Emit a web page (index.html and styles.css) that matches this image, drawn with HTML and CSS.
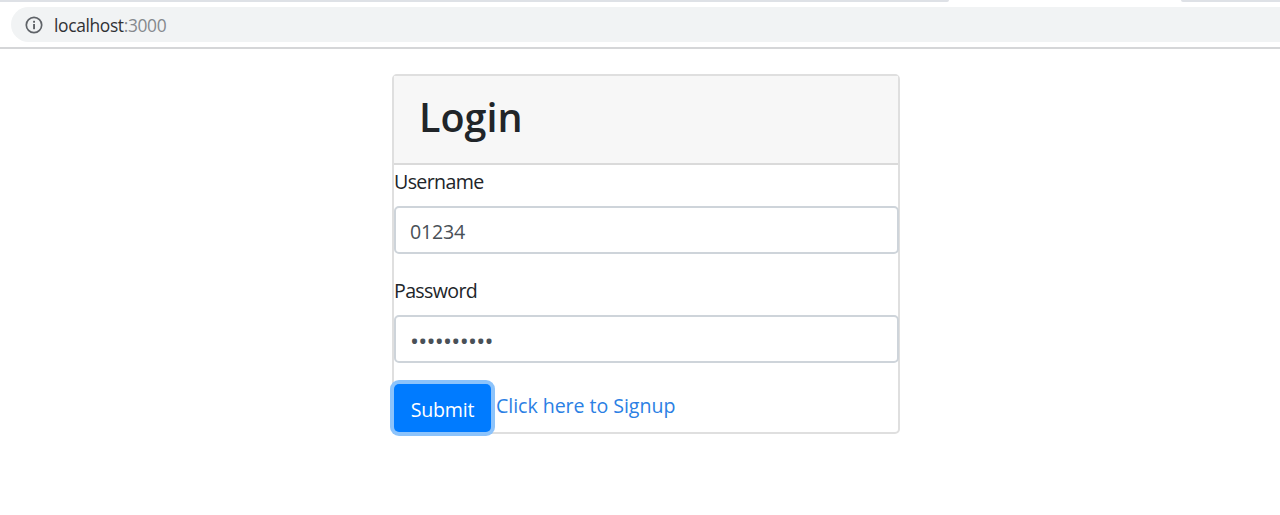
FILE: index.html
```
<!DOCTYPE html>
<html lang="en">
<head>
    <meta charset="UTF-8">
    <meta name="viewport" content="width=device-width, initial-scale=1.0">
    <title>Login</title>
    <link rel="stylesheet" href="styles.css">
</head>
<body>
    <div class="tabs">
        <div class="tab-left"></div>
        <div class="tab-right"></div>
    </div>
    <div class="toolbar">
        <div class="address">
            <svg class="info" viewBox="0 0 18 18" width="18" height="18">
                <circle cx="9" cy="9" r="7.7" fill="none" stroke="#5f6368" stroke-width="1.7"/>
                <rect x="8.1" y="4.8" width="1.9" height="1.9" fill="#5f6368"/>
                <rect x="8.1" y="8" width="1.9" height="5.2" fill="#5f6368"/>
            </svg>
            <span class="host">localhost</span><span class="port">:3000</span>
        </div>
    </div>

    <div class="card">
        <div class="card-header">
            <h1>Login</h1>
        </div>
        <form>
            <div class="form-group">
                <label for="username">Username</label>
                <input type="text" class="form-control" id="username" value="01234">
            </div>
            <div class="form-group">
                <label for="password">Password</label>
                <input type="password" class="form-control password" id="password" value="0123456789">
            </div>
            <div class="actions">
                <button type="button" class="btn">Submit</button>
                <a href="#" class="signup">Click here to Signup</a>
            </div>
        </form>
    </div>
</body>
</html>
```
FILE: styles.css
```
* {
    box-sizing: border-box;
}
body {
    margin: 0;
    min-height: 100vh;
    font-family: "Open Sans", "Noto Sans", sans-serif;
    font-size: 19.6px;
    line-height: 30px;
    color: #212529;
    background: #fff;
}
.tabs {
    display: flex;
    justify-content: space-between;
    height: 2px;
}
.tab-left, .tab-right {
    background: #dee1e6;
}
.tab-left {
    width: 949px;
    border-bottom-right-radius: 3px;
}
.tab-right {
    width: 99px;
    border-bottom-left-radius: 3px;
}
.toolbar {
    height: 47px;
    padding: 5px 0 0 11px;
    border-bottom: 2px solid #d5d6d8;
}
.address {
    display: flex;
    align-items: center;
    height: 35px;
    padding-left: 14px;
    border-radius: 18px 0 0 18px;
    background: #f1f3f4;
    font-size: 17.4px;
    letter-spacing: -0.35px;
}
.info {
    margin-right: 11px;
}
.host {
    color: #303134;
}
.port {
    color: #85898d;
}
.card {
    width: 508px;
    height: 360px;
    margin: 25px 0 0 392px;
    border: 2px solid #dfdfdf;
    border-radius: 5px;
}
.card-header {
    height: 89px;
    padding: 16px 25px;
    background: #f7f7f7;
    border-bottom: 2px solid #dadada;
}
h1 {
    margin: 0;
    font-size: 39.5px;
    font-weight: 600;
    line-height: 50px;
}
.form-group {
    height: 109px;
}
label {
    display: block;
    height: 41px;
    padding-top: 2px;
    letter-spacing: -0.65px;
}
.form-control {
    display: block;
    width: 505px;
    height: 48px;
    padding: 2px 14px 0;
    border: 2px solid #ced4da;
    border-radius: 5px;
    background: #fff;
    color: #495057;
    font-family: inherit;
    font-size: 19.6px;
    letter-spacing: -0.2px;
}
.password {
    padding: 2px 14px 0;
    font-size: 24px;
    letter-spacing: -0.75px;
}
.actions {
    display: flex;
    padding-top: 1px;
}
.btn {
    width: 97px;
    height: 48px;
    padding: 2px 0 0;
    border: 0;
    border-radius: 5px;
    background: #007bff;
    box-shadow: 0 0 0 4px #8cc3fb;
    color: #fff;
    font-family: inherit;
    font-size: 19.6px;
    letter-spacing: -0.2px;
}
.signup {
    margin: 7px 0 0 5px;
    color: #2b80e4;
    text-decoration: none;
    letter-spacing: -0.05px;
}
```
